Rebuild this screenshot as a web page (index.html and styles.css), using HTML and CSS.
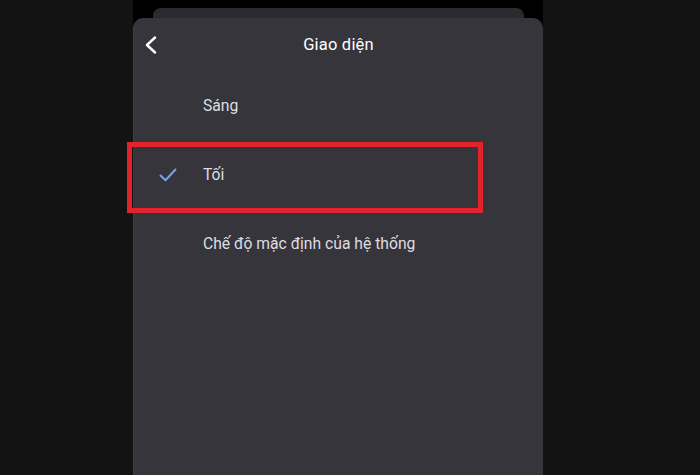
FILE: index.html
```html
<!DOCTYPE html>
<html lang="vi">
<head>
<meta charset="utf-8">
<title>Giao diện</title>
<link rel="stylesheet" href="styles.css">
</head>
<body>
<div class="screen">
  <div class="side"></div>
  <div class="center">
    <div class="back-card"></div>
    <div class="panel">
      <div class="header">
        <span class="back">
          <svg width="14" height="18" viewBox="0 0 14 18"><polyline points="11,1.5 3,9 11,16.5" fill="none" stroke="#ffffff" stroke-width="2.4" stroke-linecap="round" stroke-linejoin="round"/></svg>
        </span>
        <span class="title">Giao diện</span>
        <span></span>
      </div>
      <div class="item"><span class="mark"></span><span class="label">Sáng</span></div>
      <div class="item"><span class="mark"><svg width="18" height="14" viewBox="0 0 18 14"><polyline points="1.5,7.5 6.5,12.3 16.5,1.5" fill="none" stroke="#7ba3e4" stroke-width="2" stroke-linecap="round" stroke-linejoin="round"/></svg></span><span class="label">Tối</span></div>
      <div class="item"><span class="mark"></span><span class="label">Chế độ mặc định của hệ thống</span></div>
    </div>
  </div>
  <div class="side"></div>
</div>
<div class="highlight"></div>
</body>
</html>
```
FILE: styles.css
```css
html, body {
  margin: 0;
  padding: 0;
  height: 100%;
  background: #131313;
  font-family: Roboto, "Noto Sans", Arial, sans-serif;
  overflow: hidden;
}
.screen {
  display: flex;
  height: 475px;
}
.side {
  flex: 1;
  background: #131313;
}
.side:first-child {
  flex: 0 0 133px;
}
.center {
  flex: 0 0 410px;
  background: #000;
  padding-top: 8px;
  display: flex;
  flex-direction: column;
}
.back-card {
  height: 10px;
  margin: 0 19px 0 20px;
  background: #2b2b2f;
  border-radius: 8px 8px 0 0;
}
.panel {
  flex: 1;
  background: #36353b;
  border-radius: 10px 10px 0 0;
  border-left: 1px solid #3d3c42;
}
.header {
  height: 53px;
  display: grid;
  grid-template-columns: 1fr auto 1fr;
  align-items: center;
  padding: 0 10px;
}
.back {
  display: flex;
  align-items: center;
}
.title {
  color: #ffffff;
  font-size: 16.5px;
  font-weight: 400;
  letter-spacing: 0.2px;
}
.item {
  height: 69px;
  display: flex;
  align-items: center;
  padding-left: 25px;
}
.mark {
  width: 18px;
  height: 14px;
  margin-right: 26px;
  display: flex;
}
.label {
  color: #dedde2;
  font-size: 15.7px;
}
.highlight {
  position: absolute;
  left: 127px;
  top: 142px;
  width: 346px;
  height: 61px;
  border: 5px solid #e3232b;
}
```
